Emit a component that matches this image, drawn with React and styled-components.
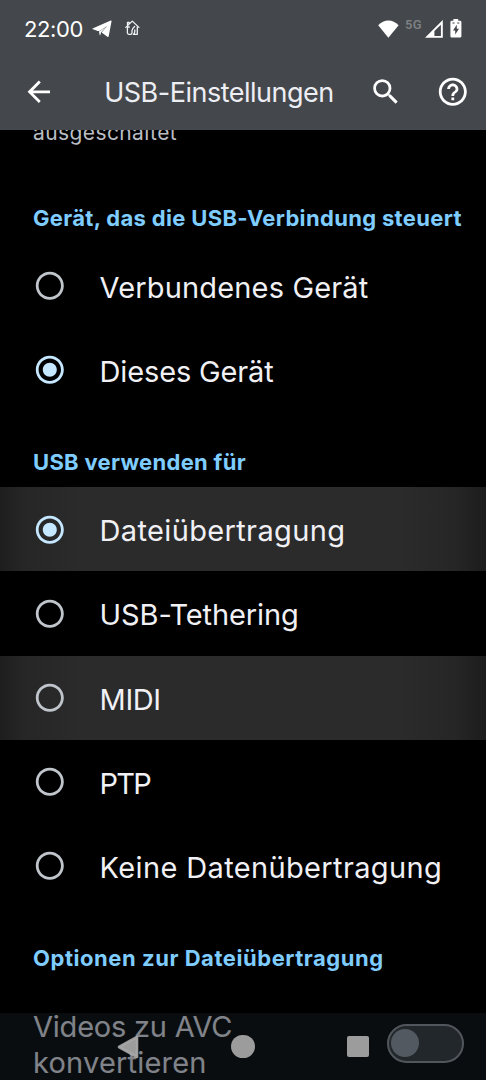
import React, { useState } from 'react';
import styled, { createGlobalStyle } from 'styled-components';
import {
  MdArrowBack,
  MdHelpOutline,
  MdRadioButtonChecked,
  MdRadioButtonUnchecked,
  MdSearch,
} from 'react-icons/md';

// ─── Data ──────────────────────────────────────────────────────────────────
const CONTROLLERS = [
  { id: 'connected', label: 'Verbundenes Gerät', track: 0.15 },
  { id: 'this', label: 'Dieses Gerät', track: -0.15 },
];

const USB_MODES = [
  { id: 'mtp', label: 'Dateiübertragung', track: 0.35, highlighted: true },
  { id: 'tether', label: 'USB-Tethering', track: -0.12 },
  { id: 'midi', label: 'MIDI', track: -0.4, highlighted: true },
  { id: 'ptp', label: 'PTP', track: -1.8 },
  { id: 'none', label: 'Keine Datenübertragung', track: 0.36 },
];

const TelegramIcon = () => (
  <svg width="20" height="18" viewBox="0 0 20 18" fill="#fff">
    <path d="M.4 9.1Q0 8.7.6 8.4L18.7.6Q19.7.3 19.5 1.4L16.7 16.2Q16.4 17.4 15.4 16.8L9.6 12.6 15.2 6.1 7.4 11.1 5.6 11Z" />
    <path d="M7 11.4 14.2 6.8 9 12.4 8.2 15.6Q7.8 15.4 7.6 14.8Z" />
  </svg>
);

const HomeIcon = () => (
  <svg width="15" height="16" viewBox="0 0 15 16" fill="none" stroke="#f2f3f5" strokeWidth="1.3" strokeLinecap="round" strokeLinejoin="round">
    <path d="M.8 7.4 7.3 1.1 13.9 7.4M2.5 6V2.3H4.1V4" />
    <path d="M2.4 7V12.8Q2.4 14.3 3.9 14.3H5.6Q7 14.3 7 12.7V10.6Q7 8.7 9.6 6.5M12.3 7V14.3H8.4Q9.8 13.6 9.8 11.6V10M2.4 7H4.3" />
  </svg>
);

const WifiIcon = () => (
  <svg width="21" height="18" viewBox="0 0 21 18" fill="#fff">
    <path d="M10.4 17.8.2 5.2Q4.7.4 10.4.4T20.6 5.2Z" />
  </svg>
);

const SignalIcon = () => (
  <svg width="18" height="18" viewBox="0 0 18 18" fill="#fff" fillRule="evenodd">
    <path d="M0 17.8 17.8 0V17.8ZM9.4 16H15.9V4.7L9.4 11.1Z" />
  </svg>
);

const BatteryIcon = () => (
  <svg width="12" height="19" viewBox="0 0 12 19">
    <path d="M3.4 0H8.2V1.8H10Q11.4 1.8 11.4 3.2V17.2Q11.4 18.6 10 18.6H1.8Q.4 18.6.4 17.2V3.2Q.4 1.8 1.8 1.8H3.4Z" fill="#fff" />
    <path d="M6.8 5.8 3 11.4H5.2V15.4L9 9.8H6.8ZM2.4 3.6H4.6V4.4H2.4ZM7.2 3.6H9.4V4.4H7.2Z" fill="#44474b" />
  </svg>
);

const BackIcon = () => (
  <svg width="22" height="24" viewBox="0 0 22 24">
    <path d="M2 12 20 2V22Z" fill="currentColor" stroke="currentColor" strokeWidth="2.6" strokeLinejoin="round" />
  </svg>
);

const RadioGroup = ({ options, value, onChange }) => (
  <div role="radiogroup">
    {options.map(({ id, label, track, highlighted }) => {
      const checked = id === value;
      return (
        <Row
          key={id}
          role="radio"
          aria-checked={checked}
          $highlighted={highlighted}
          onClick={() => onChange(id)}
        >
          <RadioMark $checked={checked}>
            {checked ? <MdRadioButtonChecked /> : <MdRadioButtonUnchecked />}
          </RadioMark>
          <RowLabel $track={track}>{label}</RowLabel>
        </Row>
      );
    })}
  </div>
);

const App = () => {
  const [controller, setController] = useState('this');
  const [mode, setMode] = useState('mtp');

  return (
    <>
      <GlobalStyle />
      <Screen>
        <TopArea>
          <StatusBar>
            <Clock>22:00</Clock>
            <TelegramIcon />
            <HomeSlot><HomeIcon /></HomeSlot>
            <Spacer />
            <WifiIcon />
            <Network>5G</Network>
            <SignalIcon />
            <BatterySlot><BatteryIcon /></BatterySlot>
          </StatusBar>
          <AppBar>
            <IconButton aria-label="Zurück"><MdArrowBack /></IconButton>
            <Title>USB-Einstellungen</Title>
            <IconButton aria-label="Suche"><MdSearch /></IconButton>
            <IconButton aria-label="Hilfe"><MdHelpOutline /></IconButton>
          </AppBar>
        </TopArea>

        <Content>
          <Summary>ausgeschaltet</Summary>

          <Heading $track={0.33}>Gerät, das die USB-Verbindung steuert</Heading>
          <RadioGroup options={CONTROLLERS} value={controller} onChange={setController} />

          <Heading $track={0.3}>USB verwenden für</Heading>
          <RadioGroup options={USB_MODES} value={mode} onChange={setMode} />

          <Heading $track={0.55}>Optionen zur Dateiübertragung</Heading>
          <SwitchRow>
            <SwitchLabel>
              <LabelLine $track={-0.22}>Videos zu AVC</LabelLine>
              {' '}
              <LabelLine $track={0.2}>konvertieren</LabelLine>
            </SwitchLabel>
            <Switch role="switch" aria-checked="false"><Thumb /></Switch>
          </SwitchRow>
        </Content>

        <NavBar>
          <BackIcon />
          <HomeDot />
          <RecentsSquare />
        </NavBar>
      </Screen>
    </>
  );
};

export default App;

// ─── Layout ────────────────────────────────────────────────────────────────
const GlobalStyle = createGlobalStyle`
  * { box-sizing: border-box; }
  body {
    margin: 0;
    background: #000;
    font-family: Inter, Roboto, sans-serif;
  }
  svg { display: block; flex-shrink: 0; }
`;

const Screen = styled.div`
  position: relative;
  display: flex;
  flex-direction: column;
  width: 486px;
  height: 1080px;
  overflow: hidden;
  background: #000;
`;

const TopArea = styled.header`
  flex: none;
  height: 129.7px;
  background: #44474b;
`;

const Content = styled.main`
  flex: 1;
  min-height: 0;
  overflow: hidden;
`;

// ─── Status bar ────────────────────────────────────────────────────────────
const StatusBar = styled.div`
  display: flex;
  align-items: center;
  height: 57px;
  padding: 0 24px;
`;

const Clock = styled.span`
  width: 67.5px;
  padding-top: 1px;
  font-size: 22px;
  letter-spacing: -0.4px;
  color: #fff;
`;

const HomeSlot = styled.div`
  margin: 0 0 2px 13px;
`;

const Spacer = styled.div`
  flex: 1;
`;

const Network = styled.span`
  margin: 0 2px 8px 6px;
  width: 18px;
  font: 600 13px/14px Roboto, sans-serif;
  letter-spacing: 0.2px;
  color: #7d8083;
`;

const BatterySlot = styled.div`
  margin: 0 0 1px 7px;
`;

// ─── App bar ───────────────────────────────────────────────────────────────
const AppBar = styled.div`
  display: flex;
  align-items: center;
  height: 69px;
  padding: 0 16.5px 0 22px;
`;

const IconButton = styled.button`
  display: flex;
  padding: 0;
  border: 0;
  background: none;
  color: #fff;
  font-size: 33.6px;

  & + & { margin-left: 33px; }
`;

const Title = styled.h1`
  flex: 1;
  margin: 2px 0 0 48.6px;
  font-size: 27px;
  font-weight: 400;
  letter-spacing: -0.5px;
  white-space: nowrap;
  color: #edeef3;
`;

// ─── List ──────────────────────────────────────────────────────────────────
const Summary = styled.p`
  margin: -9.7px 0 22.4px;
  padding-left: 33px;
  font-size: 21px;
  line-height: 26px;
  letter-spacing: 0.4px;
  color: #b9bdc3;
`;

const Heading = styled.h2`
  display: flex;
  align-items: flex-end;
  height: 75.3px;
  margin: 0;
  padding: 0 0 12.3px 33px;
  font-size: 22px;
  font-weight: 700;
  line-height: 26px;
  letter-spacing: ${({ $track }) => $track}px;
  white-space: nowrap;
  color: #7fcdfe;
`;

const Row = styled.div`
  display: flex;
  align-items: center;
  height: 84.15px;
  padding-left: 33px;
  background: ${({ $highlighted }) => ($highlighted
    ? 'linear-gradient(90deg, #1e1e1e 0, #262626 24px, #2b2b2b 84px, #2b2b2b 400px, #262626 455px, #1c1c1c 100%)'
    : 'none')};
`;

const RadioMark = styled.span`
  font-size: 33.6px;
  color: ${({ $checked }) => ($checked ? '#c5e7ff' : '#bfc5cb')};
`;

const RowLabel = styled.span`
  padding: 3px 0 0 33px;
  font-size: 29px;
  letter-spacing: ${({ $track }) => $track}px;
  white-space: nowrap;
  color: #f0f0f5;
`;

const SwitchRow = styled.div`
  display: flex;
  align-items: center;
  justify-content: space-between;
  height: 120.4px;
  padding: 0 22px 0 33px;
`;

const SwitchLabel = styled.span`
  padding-top: 4px;
  font-size: 29px;
  line-height: 36.7px;
  color: #ededf2;
`;

const LabelLine = styled.span`
  display: block;
  letter-spacing: ${({ $track }) => $track}px;
`;

const Switch = styled.div`
  width: 77.5px;
  height: 39px;
  padding: 2.9px;
  border: 2.6px solid #8c9298;
  border-radius: 20px;
  background: #303438;
`;

const Thumb = styled.div`
  width: 28px;
  height: 28px;
  border-radius: 50%;
  background: #9298a0;
`;

// ─── Navigation bar, translucent over the list ─────────────────────────────
const NavBar = styled.nav`
  position: absolute;
  inset: auto 0 0;
  display: grid;
  grid-template-columns: repeat(3, 115px);
  place-content: center;
  place-items: center;
  height: 67px;
  background: rgba(20, 26, 32, 0.5);
  color: rgba(168, 168, 168, 0.93);
`;

const HomeDot = styled.span`
  width: 23.5px;
  height: 23.5px;
  border-radius: 50%;
  background: currentColor;
`;

const RecentsSquare = styled.span`
  width: 21.5px;
  height: 21.5px;
  border-radius: 2px;
  background: currentColor;
`;
